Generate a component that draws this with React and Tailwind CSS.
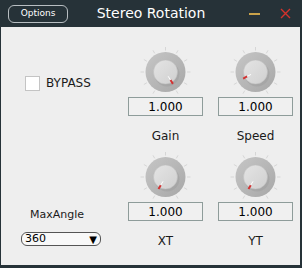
import React from "react"

const font = { fontFamily: '"DejaVu Sans", Verdana, sans-serif' }

const Knob = ({ angle }) => {
  const cx = 37.5
  const cy = 25
  const rad = (a) => ((a - 90) * Math.PI) / 180
  const pt = (a, r) => [cx + r * Math.cos(rad(a)), cy + r * Math.sin(rad(a))]
  const ticks = []
  for (let a = -150; a <= 150; a += 30) ticks.push(a)
  const [w1x, w1y] = pt(angle, 5)
  const [w2x, w2y] = pt(angle, 11)
  const [r1x, r1y] = pt(angle, 9.5)
  const [r2x, r2y] = pt(angle, 14)
  return (
    <svg width="75" height="50" viewBox="0 0 75 50" className="block">
      <defs>
        <linearGradient id="ring" x1="0" y1="0" x2="1" y2="1">
          <stop offset="0" stopColor="#c6c6c6" />
          <stop offset="1" stopColor="#a7a7a7" />
        </linearGradient>
        <linearGradient id="cap" x1="0" y1="0" x2="1" y2="1">
          <stop offset="0" stopColor="#e4e4e4" />
          <stop offset="1" stopColor="#d0d0d0" />
        </linearGradient>
      </defs>
      {ticks.map((a) => {
        const [x1, y1] = pt(a, 21.5)
        const [x2, y2] = pt(a, 25)
        return <line key={a} x1={x1} y1={y1} x2={x2} y2={y2} stroke="#d6d6d6" strokeWidth="1" />
      })}
      <circle cx={cx} cy={cy} r="20" fill="url(#ring)" />
      <circle cx={cx + 1.5} cy={cy + 2} r="12.5" fill="#9c9c9c" opacity="0.45" />
      <circle cx={cx} cy={cy} r="12" fill="url(#cap)" stroke="#bdbdbd" strokeWidth="0.5" />
      <line x1={w1x} y1={w1y} x2={w2x} y2={w2y} stroke="#ffffff" strokeWidth="1" />
      <line x1={r1x} y1={r1y} x2={r2x} y2={r2y} stroke="#d23232" strokeWidth="2" />
    </svg>
  )
}

const KnobCell = ({ label, angle }) => (
  <div className="flex flex-col items-center">
    <Knob angle={angle} />
    <div className="w-[75px] h-[19px] border border-[#8e9c9a] bg-[#f0f0f0] flex items-center justify-center text-[12px] text-black">
      1.000
    </div>
    <div className="mt-[13px] h-[15px] leading-[15px] text-[12px] text-[#1a1a1a]">{label}</div>
  </div>
)

export default function App() {
  return (
    <div className="w-[302px] h-[268px] bg-[#263238] flex flex-col" style={font}>
      {/* title bar */}
      <div className="h-[27px] grid grid-cols-[1fr_auto_1fr] items-center">
        <div className="pl-[8px]">
          <div className="w-[60px] h-[18px] rounded-[6px] border border-[#b8bec2] flex items-center justify-center text-[9px] text-white">
            Options
          </div>
        </div>
        <div className="text-[14px] text-white">Stereo Rotation</div>
        <div className="flex items-center justify-end pr-[11px] gap-[20px]">
          <div className="w-[11px] h-[2px] bg-[#c9a24a]" />
          <svg width="11" height="11" viewBox="0 0 11 11">
            <path d="M1 1 L10 10 M10 1 L1 10" stroke="#d4322c" strokeWidth="1.4" />
          </svg>
        </div>
      </div>

      {/* body */}
      <div className="ml-[1px] mr-[2px] mb-[3px] flex-1 bg-[#eeeeee] pt-[20px] grid grid-cols-[112px_75px_75px] gap-x-[15px] gap-y-[8px] content-start">
        <div className="pl-[24px] pt-[27px]">
          <div className="flex items-center gap-[6px]">
            <div className="w-[15px] h-[15px] border border-[#c4c4c4] bg-white" />
            <span className="text-[12px] text-[#1a1a1a]">BYPASS</span>
          </div>
        </div>
        <KnobCell label="Gain" angle={148} />
        <KnobCell label="Speed" angle={-118} />

        <div className="pt-[55px] flex flex-col">
          <div className="text-center text-[11px] leading-[15px] text-[#1a1a1a]">MaxAngle</div>
          <div className="mt-[10px] ml-[20px] w-[80px] h-[14px] rounded-[6px] border border-[#555] bg-[#f8f8f8] flex items-center justify-between px-[3px] text-[11px] text-black">
            <span>360</span>
            <span className="text-[10px]">▼</span>
          </div>
        </div>
        <KnobCell label="XT" angle={-150} />
        <KnobCell label="YT" angle={-150} />
      </div>
    </div>
  )
}
